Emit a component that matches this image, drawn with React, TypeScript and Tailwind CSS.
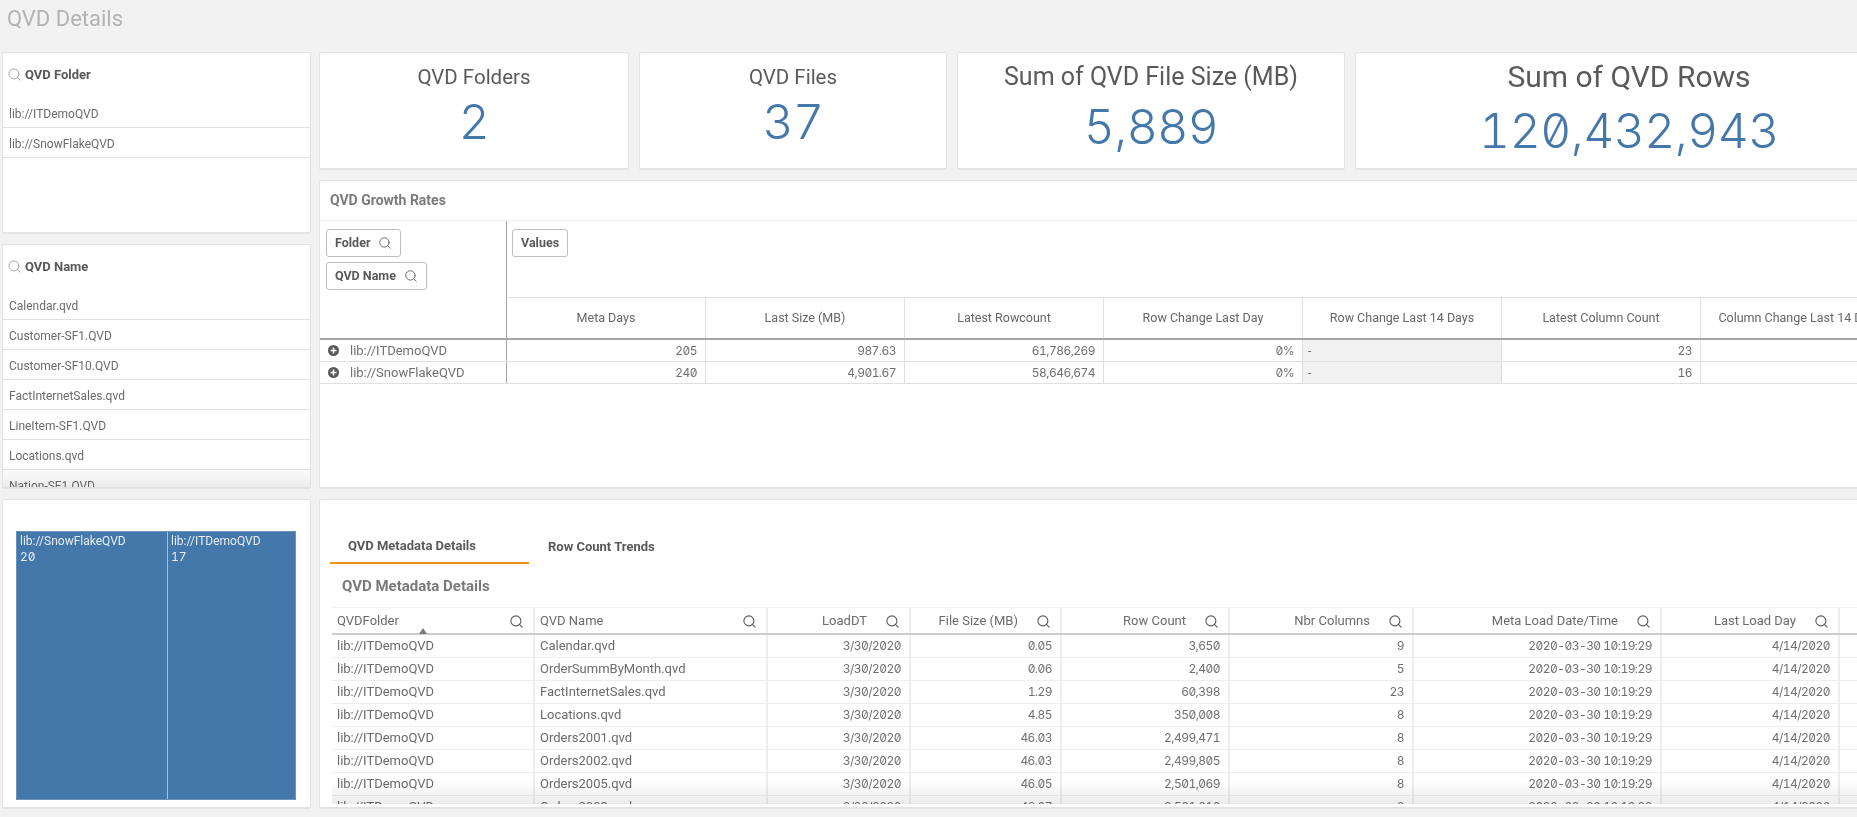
import { Search } from 'lucide-react';

const sans = 'font-["Roboto","Noto_Sans",sans-serif]';
const num = 'font-["Inter",sans-serif] tabular-nums slashed-zero';
const cellNum = 'text-[12px] tracking-[-0.55px] text-[#707070]';

const folders = ['lib://ITDemoQVD', 'lib://SnowFlakeQVD'];
const names = [
  'Calendar.qvd',
  'Customer-SF1.QVD',
  'Customer-SF10.QVD',
  'FactInternetSales.qvd',
  'LineItem-SF1.QVD',
  'Locations.qvd',
  'Nation-SF1.QVD',
];

const pivotCols = [
  'Meta Days',
  'Last Size (MB)',
  'Latest Rowcount',
  'Row Change Last Day',
  'Row Change Last 14 Days',
  'Latest Column Count',
  'Column Change Last 14 Days',
];

const pivotRows = [
  { name: 'lib://ITDemoQVD', vals: ['205', '987.63', '61,786,269', '0%', '-', '23', ''] },
  { name: 'lib://SnowFlakeQVD', vals: ['240', '4,901.67', '58,646,674', '0%', '-', '16', ''] },
];

const metaCols = [
  { label: 'QVDFolder', w: 'w-[203px]', left: true },
  { label: 'QVD Name', w: 'w-[233px]', left: true },
  { label: 'LoadDT', w: 'w-[143px]' },
  { label: 'File Size (MB)', w: 'w-[151px]' },
  { label: 'Row Count', w: 'w-[168px]' },
  { label: 'Nbr Columns', w: 'w-[184px]' },
  { label: 'Meta Load Date/Time', w: 'w-[248px]' },
  { label: 'Last Load Day', w: 'w-[178px]' },
];

const metaRows = [
  ['Calendar.qvd', '0.05', '3,650', '9'],
  ['OrderSummByMonth.qvd', '0.06', '2,400', '5'],
  ['FactInternetSales.qvd', '1.29', '60,398', '23'],
  ['Locations.qvd', '4.85', '350,008', '8'],
  ['Orders2001.qvd', '46.03', '2,499,471', '8'],
  ['Orders2002.qvd', '46.03', '2,499,805', '8'],
  ['Orders2005.qvd', '46.05', '2,501,069', '8'],
  ['Orders2003.qvd', '46.07', '2,501,010', '8'],
];

function Panel({ className, children }: { className: string; children?: React.ReactNode }) {
  return (
    <div className={`bg-white border border-[#e3e3e3] border-b-2 rounded-[2px] overflow-hidden ${className}`}>
      {children}
    </div>
  );
}

function Filter({ title, items, className, fade }: { title: string; items: string[]; className: string; fade?: boolean }) {
  return (
    <Panel className={`relative ${className}`}>
      <div className="h-[45px] flex items-center pl-[4px] pb-[2px]">
        <Search size={15} strokeWidth={1.25} className="text-[#909090]" />
        <span className="ml-[3px] text-[13px] font-bold text-[#595959]">{title}</span>
      </div>
      {items.map((item) => (
        <div key={item} className="h-[30px] flex items-center pl-[6px] pt-[2px] border-b border-[#e0e0e0] text-[12px] text-[#6b6b6b]">
          {item}
        </div>
      ))}
      {fade && <div className="absolute left-0 right-0 bottom-0 h-[22px] bg-gradient-to-b from-transparent to-[#ececec] mix-blend-multiply" />}
    </Panel>
  );
}

function Kpi({ title, value, className, titleSize, valueClass }: { title: string; value: string; className: string; titleSize: string; valueClass: string }) {
  return (
    <Panel className={`flex flex-col items-center ${className}`}>
      <div className={`mt-[10px] h-[28px] leading-[28px] text-[#5a5a5a] ${titleSize}`}>{title}</div>
      <div className={`${num} text-[48px] tracking-[-0.5px] font-[350] leading-[56px] text-[#4477aa] ${valueClass}`}>{value}</div>
    </Panel>
  );
}

function PillButton({ label, search }: { label: string; search?: boolean }) {
  return (
    <div className="h-[28px] inline-flex items-center px-[8px] gap-[8px] border border-[#bdbdbd] rounded-[3px] bg-white text-[12.5px] font-bold text-[#595959]">
      {label}
      {search && <Search size={14} strokeWidth={1.5} className="text-[#595959]" />}
    </div>
  );
}

function PlusDot() {
  return (
    <svg width="11" height="11" viewBox="0 0 11 11" className="shrink-0">
      <circle cx="5.5" cy="5.5" r="5.5" fill="#595959" />
      <path d="M5.5 2.5v6M2.5 5.5h6" stroke="#fff" strokeWidth="1.5" />
    </svg>
  );
}

export default function App() {
  return (
    <div className={`${sans} w-[1857px] h-[817px] overflow-hidden bg-[#f2f2f2]`}>
      <div className="h-[52px] pl-[7px] pt-[4px] text-[22px] leading-[30px] text-[#b3b3b3]">QVD Details</div>
      <div className="flex gap-[8px] pl-[2px]">
        {/* Left column */}
        <div className="w-[309px] shrink-0 flex flex-col gap-[10px]">
          <Filter title="QVD Folder" items={folders} className="h-[182px]" />
          <Filter title="QVD Name" items={names} className="h-[245px]" fade />
          <Panel className="h-[310px]">
            <div className="mt-[31px] ml-[13px] w-[280px] h-[269px] bg-[#4477aa] border border-[#6a93bb] flex text-[12px] leading-[15px] text-[#e6edf4]">
              <div className="w-[151px] h-full border-r border-[#a8c0d8] pl-[3px] pt-[2px]">
                lib://SnowFlakeQVD
                <div className={num}>20</div>
              </div>
              <div className="flex-1 pl-[3px] pt-[2px]">
                lib://ITDemoQVD
                <div className={num}>17</div>
              </div>
            </div>
          </Panel>
        </div>

        {/* Right column */}
        <div className="w-[1584px] shrink-0 flex flex-col gap-[10px]">
          <div className="flex gap-[10px] h-[118px]">
            <Kpi title="QVD Folders" value="2" className="w-[310px]" titleSize="text-[20.5px]" valueClass="mt-[3px]" />
            <Kpi title="QVD Files" value="37" className="w-[308px]" titleSize="text-[20.5px]" valueClass="mt-[3px]" />
            <Kpi title="Sum of QVD File Size (MB)" value="5,889" className="w-[388px]" titleSize="text-[25px]" valueClass="mt-[8px]" />
            <Kpi title="Sum of QVD Rows" value="120,432,943" className="w-[548px]" titleSize="text-[30px]" valueClass="mt-[12px]" />
          </div>

          {/* Growth rates */}
          <Panel className="h-[309px]">
            <div className="h-[40px] flex items-center pl-[10px] border-b border-[#f0f0f0] text-[14px] font-bold text-[#7a7a7a]">
              QVD Growth Rates
            </div>
            <div className="flex h-[119px]">
              <div className="w-[187px] shrink-0 border-r border-[#a6a6a6] border-b-2 border-b-[#a6a6a6] pl-[6px] pt-[8px] flex flex-col items-start gap-[5px]">
                <PillButton label="Folder" search />
                <PillButton label="QVD Name" search />
              </div>
              <div className="flex-1 flex flex-col">
                <div className="h-[77px] pl-[5px] pt-[8px] border-b border-[#e0e0e0]">
                  <PillButton label="Values" />
                </div>
                <div className="flex h-[42px] border-b-2 border-[#a6a6a6]">
                  {pivotCols.map((c) => (
                    <div key={c} className="w-[199px] shrink-0 flex items-center justify-center border-r border-[#e0e0e0] text-[12.5px] text-[#666666]">
                      {c}
                    </div>
                  ))}
                </div>
              </div>
            </div>
            {pivotRows.map((r) => (
              <div key={r.name} className="flex h-[22px] border-b border-[#e0e0e0]">
                <div className="w-[187px] shrink-0 flex items-center pl-[8px] gap-[11px] border-r border-[#a6a6a6] text-[13px] text-[#707070]">
                  <PlusDot />
                  {r.name}
                </div>
                {r.vals.map((v, i) =>
                  v === '-' ? (
                    <div key={i} className="w-[199px] shrink-0 flex items-center pl-[5px] bg-[#f2f2f2] border-r border-[#e0e0e0] text-[12px] text-[#707070]">
                      -
                    </div>
                  ) : (
                    <div key={i} className={`w-[199px] shrink-0 flex items-center justify-end pr-[8px] border-r border-[#e0e0e0] ${num} ${cellNum}`}>
                      {v}
                    </div>
                  ),
                )}
              </div>
            ))}
          </Panel>

          {/* Metadata */}
          <Panel className="h-[310px]">
            <div className="flex mt-[27px] ml-[10px]">
              <div className="w-[199px] h-[37px] flex items-center pl-[18px] pt-[3px] border-b-2 border-[#ef960f] text-[13px] font-bold text-[#595959]">
                QVD Metadata Details
              </div>
              <div className="h-[37px] flex items-center pl-[19px] pt-[3px] text-[13px] font-bold text-[#595959]">
                Row Count Trends
              </div>
            </div>
            <div className="h-[43px] flex items-center pl-[22px] pt-[2px] text-[15px] font-bold text-[#7a7a7a]">QVD Metadata Details</div>
            <div className="relative ml-[12px] h-[197px] overflow-hidden text-[13px] text-[#6b6b6b]">
              <div className="flex h-[28px] border-t border-b-2 border-t-[#f0f0f0] border-b-[#cccccc]">
                {metaCols.map((c) => (
                  <div key={c.label} className={`${c.w} shrink-0 flex items-center border-r-2 border-[#eeeeee] pl-[5px] pr-[9px]`}>
                    <span className={`flex-1 ${c.left ? '' : 'text-right pr-[18px]'}`}>{c.label}</span>
                    <Search size={15} strokeWidth={1.75} className="text-[#595959] mt-[2px]" />
                  </div>
                ))}
              </div>
              <div className="absolute left-[87px] top-[21px] w-0 h-0 border-x-[4px] border-x-transparent border-b-[6px] border-b-[#7a7a7a]" />
              {metaRows.map((r) => (
                <div key={r[0]} className="flex h-[23px] border-b border-[#eeeeee]">
                  <div className={`${metaCols[0].w} shrink-0 flex items-center pl-[5px] border-r-2 border-[#eeeeee]`}>lib://ITDemoQVD</div>
                  <div className={`${metaCols[1].w} shrink-0 flex items-center pl-[5px] border-r-2 border-[#eeeeee]`}>{r[0]}</div>
                  {['3/30/2020', r[1], r[2], r[3], '2020-03-30 10:19:29', '4/14/2020'].map((v, i) => (
                    <div key={i} className={`${metaCols[i + 2].w} shrink-0 flex items-center justify-end pr-[8px] border-r-2 border-[#eeeeee] ${num} ${cellNum}`}>
                      {v}
                    </div>
                  ))}
                </div>
              ))}
              <div className="absolute left-0 right-0 bottom-0 h-[24px] bg-gradient-to-b from-transparent to-[#ececec] mix-blend-multiply" />
            </div>
          </Panel>
        </div>
      </div>
    </div>
  );
}
